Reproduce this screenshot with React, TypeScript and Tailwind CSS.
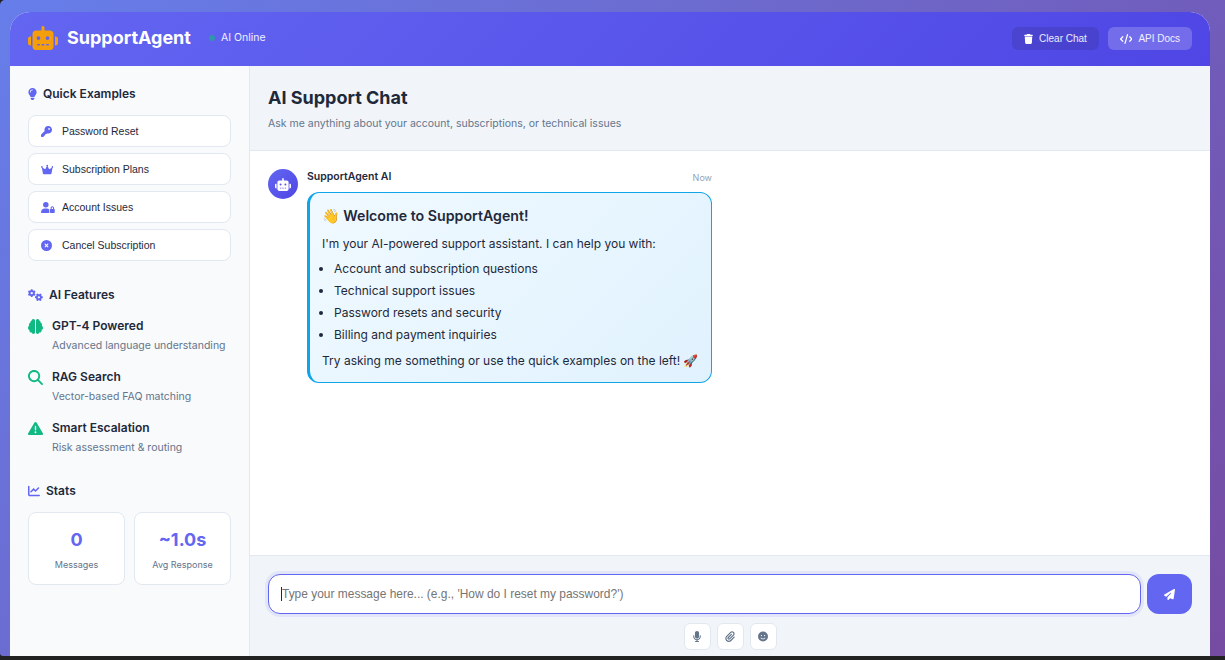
import React from 'react';
import {
  FaRobot, FaLightbulb, FaKey, FaCrown, FaUserLock, FaCircleXmark, FaGears, FaBrain, FaMagnifyingGlass,
  FaTriangleExclamation, FaChartLine, FaTrash, FaCode, FaMicrophone, FaPaperclip, FaFaceSmile, FaPaperPlane,
} from 'react-icons/fa6';

const examples = [
  { icon: FaKey, label: 'Password Reset', size: 'w-[11px] h-[11px]' },
  { icon: FaCrown, label: 'Subscription Plans', size: 'w-[12.4px] h-[11px]' },
  { icon: FaUserLock, label: 'Account Issues', size: 'w-[13.75px] h-[11px]' },
  { icon: FaCircleXmark, label: 'Cancel Subscription', size: 'w-[11px] h-[11px]' },
];

const features = [
  { icon: FaBrain, title: 'GPT-4 Powered', text: 'Advanced language understanding' },
  { icon: FaMagnifyingGlass, title: 'RAG Search', text: 'Vector-based FAQ matching' },
  { icon: FaTriangleExclamation, title: 'Smart Escalation', text: 'Risk assessment & routing' },
];

const stats = [
  { value: '0', label: 'Messages' },
  { value: '~1.0s', label: 'Avg Response' },
];

const helpItems = [
  'Account and subscription questions',
  'Technical support issues',
  'Password resets and security',
  'Billing and payment inquiries',
];

const arial = 'font-["Liberation_Sans",sans-serif]';

function Sidebar() {
  return (
    <aside className="w-[240px] shrink-0 bg-[#f8fafc] border-r border-[#e2e8f0] px-[18px] pt-[18px]">
      <h3 className="flex items-center gap-[6px] h-[19px] text-[12px] font-semibold text-[#1e293b]">
        <FaLightbulb className="text-[#6366f1] w-[9px] h-[12px]" />
        Quick Examples
      </h3>
      <div className="mt-[12px] flex flex-col gap-[6px]">
        {examples.map((e) => (
          <button key={e.label} className={`flex items-center h-[32px] pl-[12px] pt-[1px] bg-white border border-[#e2e8f0] rounded-lg text-[10.5px] text-[#1e293b] ${arial}`}>
            <span className="w-[21px] flex justify-start">
              <e.icon className={`text-[#6366f1] ${e.size}`} />
            </span>
            {e.label}
          </button>
        ))}
      </div>

      <h3 className="mt-[24px] flex items-center gap-[6px] h-[19px] text-[12px] font-semibold text-[#1e293b]">
        <FaGears className="text-[#6366f1] w-[15px] h-[12px]" />
        AI Features
      </h3>
      <div className="mt-[14px] flex flex-col gap-[15px]">
        {features.map((f) => (
          <div key={f.title} className="flex gap-[9px]">
            <f.icon className="text-[#10b981] w-[15px] h-[15px] mt-[1px] shrink-0" />
            <div>
              <div className="text-[12px] leading-[16px] font-semibold text-[#1e293b]">{f.title}</div>
              <div className="mt-[4px] text-[10.5px] leading-[16px] text-[#64748b]">{f.text}</div>
            </div>
          </div>
        ))}
      </div>

      <h3 className="mt-[25px] flex items-center gap-[6px] h-[19px] text-[12px] font-semibold text-[#1e293b]">
        <FaChartLine className="text-[#6366f1] w-[12px] h-[12px]" />
        Stats
      </h3>
      <div className="mt-[12px] grid grid-cols-2 gap-[9px]">
        {stats.map((s) => (
          <div key={s.label} className="h-[73px] bg-white border border-[#e2e8f0] rounded-lg flex flex-col items-center pt-[15px]">
            <div className="text-[18px] leading-[24px] font-bold text-[#6366f1]">{s.value}</div>
            <div className="mt-[6px] text-[9px] leading-[14px] text-[#64748b]">{s.label}</div>
          </div>
        ))}
      </div>
    </aside>
  );
}

function WelcomeMessage() {
  return (
    <div className="flex gap-[9px] px-[18px] pt-[18px]">
      <div className="w-[30px] h-[30px] rounded-full bg-[linear-gradient(135deg,#6366f1,#4f46e5)] flex items-center justify-center text-white">
        <FaRobot className="w-[16px] h-[13px]" />
      </div>
      <div className="w-[405px]">
        <div className="flex items-center justify-between h-[16px] mb-[7px]">
          <span className="text-[10.5px] font-semibold text-[#1e293b]">SupportAgent AI</span>
          <span className="mt-[2px] text-[9px] text-[#94a3b8]">Now</span>
        </div>
        <div className="h-[191px] rounded-xl border border-[#0ea5e9] border-l-[3px] bg-[linear-gradient(135deg,#f0f9ff,#e0f2fe)] px-[12px] pt-[13px] text-[12px] text-[#1e293b]">
          <div className="text-[14.2px] leading-[20px] font-semibold">👋 Welcome to SupportAgent!</div>
          <p className="mt-[8px] leading-[20px]">I'm your AI-powered support assistant. I can help you with:</p>
          <ul className="mt-[4px] pl-[12px] list-disc">
            {helpItems.map((item) => (
              <li key={item} className="leading-[22px]">{item}</li>
            ))}
          </ul>
          <p className="mt-[5px] leading-[20px]">Try asking me something or use the quick examples on the left! 🚀</p>
        </div>
      </div>
    </div>
  );
}

function InputArea() {
  return (
    <div className="h-[101px] bg-[#f1f5f9] border-t border-[#e2e8f0] px-[18px] pt-[18px]">
      <div className="flex gap-[6px]">
        <div className="flex-1 h-[40px] flex items-center bg-white rounded-xl border border-[#6366f1] shadow-[0_0_0_3px_rgba(99,102,241,0.1)] pl-[12px]">
          <span className="w-px h-[14px] bg-[#1e293b]" />
          <span className={`mt-[1px] text-[11.96px] text-[#757575] ${arial}`}>Type your message here... (e.g., 'How do I reset my password?')</span>
        </div>
        <button className="w-[45px] h-[40px] rounded-xl bg-[#6366f1] text-white flex items-center justify-center">
          <FaPaperPlane className="w-[11px] h-[11px]" />
        </button>
      </div>
      <div className="mt-[9px] flex justify-center gap-[6px]">
        {[FaMicrophone, FaPaperclip, FaFaceSmile].map((Icon, i) => (
          <button key={i} className="w-[27px] h-[27px] rounded-md bg-white border border-[#e2e8f0] flex items-center justify-center text-[#64748b]">
            <Icon className="w-[10px] h-[11px]" />
          </button>
        ))}
      </div>
    </div>
  );
}

export default function App() {
  return (
    <div className="w-[1225px] h-[660px] overflow-hidden flex flex-col bg-[#222222]" style={{ fontFamily: 'Inter, "Noto Color Emoji", sans-serif' }}>
      <div className="h-[656px] rounded-tl-[5px] rounded-bl-[3px] bg-[linear-gradient(135deg,#667eea,#764ba2)] pt-[12px] pl-[10px] pr-[15px]">
        <div className="h-full flex flex-col bg-white rounded-t-[20px] overflow-hidden">
          <header className="h-[54px] shrink-0 bg-[linear-gradient(135deg,#6366f1,#4f46e5)] flex items-center px-[18px] text-white">
            <FaRobot className="text-[#f59e0b] w-[30px] h-[24px] mb-[2px]" />
            <span className="ml-[9px] mb-[4px] text-[18px] font-bold">SupportAgent</span>
            <span className="ml-[18px] mb-[2px] w-[6px] h-[6px] rounded-full bg-[#10b981] opacity-60" />
            <span className="ml-[6px] mb-[2px] text-[10.5px] opacity-90">AI Online</span>
            <button className={`ml-auto mb-[1px] h-[23px] w-[87px] rounded-md bg-black/10 flex items-center justify-center gap-[6px] text-[10px] text-white/90 ${arial}`}>
              <FaTrash className="w-[9px] h-[10px] text-white" />
              Clear Chat
            </button>
            <button className={`ml-[9px] mb-[1px] h-[23px] w-[84px] rounded-md bg-white/20 flex items-center justify-center gap-[6px] text-[10px] text-white/90 ${arial}`}>
              <FaCode className="w-[12.5px] h-[10px] text-white" />
              API Docs
            </button>
          </header>
          <div className="flex-1 flex min-h-0">
            <Sidebar />
            <main className="flex-1 flex flex-col min-w-0">
              <div className="h-[85px] shrink-0 bg-[#f1f5f9] border-b border-[#e2e8f0] px-[18px] pt-[18px]">
                <h2 className="text-[18px] leading-[27px] font-bold text-[#1e293b]">AI Support Chat</h2>
                <p className="mt-[5px] text-[10.5px] leading-[16px] text-[#64748b]">Ask me anything about your account, subscriptions, or technical issues</p>
              </div>
              <div className="flex-1 bg-white min-h-0">
                <WelcomeMessage />
              </div>
              <InputArea />
            </main>
          </div>
        </div>
      </div>
    </div>
  );
}
